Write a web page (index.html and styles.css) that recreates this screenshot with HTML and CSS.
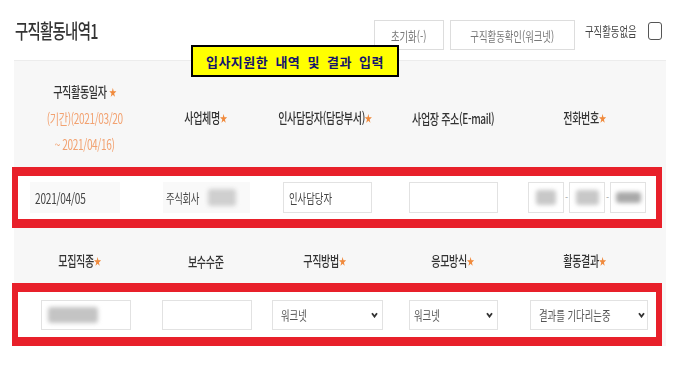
FILE: index.html
```html
<!DOCTYPE html>
<html lang="ko">
<head>
<meta charset="utf-8">
<title>구직활동내역</title>
<link rel="stylesheet" href="styles.css">
</head>
<body>
<div class="page">
  <div class="top">
    <h1 class="title"><span class="cn cl">구직활동내역1</span></h1>
    <div class="actions">
      <button class="btn btn-reset" type="button"><span class="cn cc">초기화(-)</span></button>
      <button class="btn btn-check" type="button"><span class="cn cc">구직활동확인(워크넷)</span></button>
      <label class="none-check"><span class="cn cl txt">구직활동없음</span><span class="box"></span></label>
    </div>
  </div>

  <div class="panel">
    <div class="head head1">
      <div class="hcell">
        <div><span class="cn cc">구직활동일자 <span class="star">★</span></span></div>
        <div class="range"><span class="cn cc">(기간)(2021/03/20</span></div>
        <div class="range"><span class="cn cc">~ 2021/04/16)</span></div>
      </div>
      <div class="hcell"><span class="cn cc">사업체명<span class="star">★</span></span></div>
      <div class="hcell"><span class="cn cc">인사담당자(담당부서)<span class="star">★</span></span></div>
      <div class="hcell"><span class="cn cc">사업장 주소(E-mail)</span></div>
      <div class="hcell"><span class="cn cc">전화번호<span class="star">★</span></span></div>
    </div>

    <div class="mark row1">
      <div class="field ro date"><span class="cn cl">2021/04/05</span></div>
      <div class="field ro company"><span class="cn cl name">주식회사</span><span class="blur blur-name"></span></div>
      <div class="field inp manager"><span class="cn cl">인사담당자</span></div>
      <div class="field inp email"></div>
      <div class="phone">
        <div class="field inp pbox"><span class="blur pb1"></span></div>
        <span class="dash">-</span>
        <div class="field inp pbox"><span class="blur pb2"></span></div>
        <span class="dash">-</span>
        <div class="field inp pbox"><span class="blur pb3"></span></div>
      </div>
    </div>

    <div class="head head2">
      <div class="hcell first"><span class="cn cc">모집직종<span class="star">★</span></span></div>
      <div class="hcell"><span class="cn cc">보수수준</span></div>
      <div class="hcell"><span class="cn cc">구직방법<span class="star">★</span></span></div>
      <div class="hcell"><span class="cn cc">응모방식<span class="star">★</span></span></div>
      <div class="hcell"><span class="cn cc">활동결과<span class="star">★</span></span></div>
    </div>

    <div class="mark row2">
      <div class="field inp job"><span class="blur blur-job"></span></div>
      <div class="field inp pay"></div>
      <div class="field inp sel method"><span class="cn cl">워크넷</span>
        <svg class="chev" width="7" height="6" viewBox="0 0 7 6"><path d="M1 1.2 L3.5 4.6 L6 1.2" fill="none" stroke="#333" stroke-width="1.8"/></svg>
      </div>
      <div class="field inp sel apply"><span class="cn cl">워크넷</span>
        <svg class="chev" width="7" height="6" viewBox="0 0 7 6"><path d="M1 1.2 L3.5 4.6 L6 1.2" fill="none" stroke="#333" stroke-width="1.8"/></svg>
      </div>
      <div class="field inp sel result"><span class="cn cl">결과를 기다리는중</span>
        <svg class="chev" width="7" height="6" viewBox="0 0 7 6"><path d="M1 1.2 L3.5 4.6 L6 1.2" fill="none" stroke="#333" stroke-width="1.8"/></svg>
      </div>
    </div>
  </div>

  <div class="note">입사지원한 내역 및 결과 입력</div>
</div>
</body>
</html>
```

FILE: styles.css
```css
html, body {
  margin: 0;
  padding: 0;
  background: #fff;
}

body {
  font-family: "Noto Sans CJK KR", "Noto Sans", sans-serif;
  color: #333;
}

.page {
  position: relative;
  width: 682px;
  height: 377px;
  overflow: hidden;
}

/* the source screenshot shows horizontally condensed lettering */
.cn {
  display: inline-block;
  white-space: nowrap;
  transform: scaleX(0.72);
}
.cl { transform-origin: 0 50%; }
.cc { transform-origin: 50% 50%; margin: 0 -40px; }

.top {
  height: 60px;
  display: flex;
  align-items: flex-start;
  padding: 0 20px 0 15px;
  box-sizing: border-box;
}

.title {
  margin: 17px 0 0;
  font-size: 20px;
  line-height: 28px;
  font-weight: 500;
  letter-spacing: -1px;
  color: #333;
}

.actions {
  margin-left: auto;
  display: flex;
  align-items: flex-start;
  padding-top: 20px;
}

.btn {
  height: 30px;
  border: 1px solid #ddd;
  background: #fff;
  font-family: inherit;
  font-size: 13px;
  color: #777;
  padding: 0;
  margin: 0 6px 0 0;
  text-align: center;
  overflow: visible;
}

.btn-reset { width: 70px; }
.btn-check { width: 125px; margin-right: 10px; }

.none-check {
  display: flex;
  align-items: center;
  height: 18px;
  margin-top: 2px;
  font-size: 13px;
  color: #444;
}

.none-check .txt { width: 57px; margin-top: -2px; }

.none-check .box {
  width: 14px;
  height: 18px;
  margin-left: 6px;
  border: 1.5px solid #555;
  border-radius: 3px;
  box-sizing: border-box;
  background: #fff;
}

.panel {
  margin: 0 16px 0 14px;
  background: #f7f7f7;
  border-top: 1px solid #ececec;
}

.head {
  display: grid;
  grid-template-columns: 120px 121px 117px 140px 123px;
  padding-left: 11px;
  box-sizing: border-box;
  align-items: center;
  text-align: center;
  font-size: 14px;
  font-weight: 500;
  letter-spacing: -0.5px;
  color: #333;
}

.head1 {
  height: 106px;
  padding-top: 17px;
  padding-bottom: 11px;
}

.head1 .hcell { line-height: 26px; }

.head2 {
  height: 55px;
  padding-top: 22px;
  padding-bottom: 13px;
  line-height: 20px;
}

.head2 .first { padding-right: 10px; }

.star {
  color: #f08a3c;
  font-size: 10px;
  vertical-align: 1px;
}

.range { color: #f2a271; font-weight: 400; }

.mark {
  display: flex;
  align-items: center;
  margin: 0 4px 0 -2px;
  border-style: solid;
  border-color: #e8202a;
  border-width: 9px 6px;
  background: #fff;
  box-sizing: border-box;
}

.row1 { height: 61px; padding-left: 12px; }
.row2 { height: 63px; padding-left: 23px; }

.field {
  flex: none;
  display: flex;
  align-items: center;
  height: 31px;
  box-sizing: border-box;
  font-size: 13px;
  color: #444;
}

.row2 .field { height: 30px; }

.ro { background: #f9f9f9; padding-left: 5px; }
.inp { background: #fff; border: 1px solid #e2e2e2; padding-left: 5px; }

.date { width: 90px; font-size: 14px; letter-spacing: -0.3px; }
.company { width: 87px; margin-left: 43px; padding-left: 3px; letter-spacing: -0.5px; }
.company .name { width: 36px; }
.manager { width: 89px; margin-left: 33px; }
.email { width: 89px; margin-left: 37px; }

.phone {
  display: flex;
  align-items: center;
  margin-left: 30px;
}

.pbox {
  width: 36px;
  padding: 0;
  justify-content: center;
}

.dash {
  width: 5px;
  text-align: center;
  font-size: 9px;
  color: #999;
}

.blur {
  display: block;
  height: 15px;
  border-radius: 3px;
  background: #c8c8c8;
  filter: blur(2px);
}

.blur-name { width: 28px; margin-left: 6px; height: 17px; background: #cfcfcf; }
.pb1 { width: 20px; }
.pb2 { width: 23px; }
.pb3 { width: 25px; background: #a9a9a9; height: 11px; }
.blur-job { width: 50px; margin-left: 1px; height: 16px; background: #c4c4c4; }

.job { width: 90px; }
.pay { width: 90px; margin-left: 31px; }
.method { width: 111px; margin-left: 20px; padding-left: 8px; }
.apply { width: 89px; margin-left: 26px; padding-left: 4px; }
.result { width: 118px; margin-left: 32px; padding-left: 8px; }

.sel {
  justify-content: space-between;
  padding-right: 4px;
  color: #555;
}

.chev { flex: none; }

.note {
  position: absolute;
  left: 191px;
  top: 45px;
  width: 208px;
  height: 32px;
  box-sizing: border-box;
  display: flex;
  align-items: center;
  justify-content: center;
  background: #ffff00;
  border: 2px solid #000;
  font-size: 13px;
  font-weight: 700;
  letter-spacing: 0.5px;
  word-spacing: 3px;
  color: #14146e;
}
```
